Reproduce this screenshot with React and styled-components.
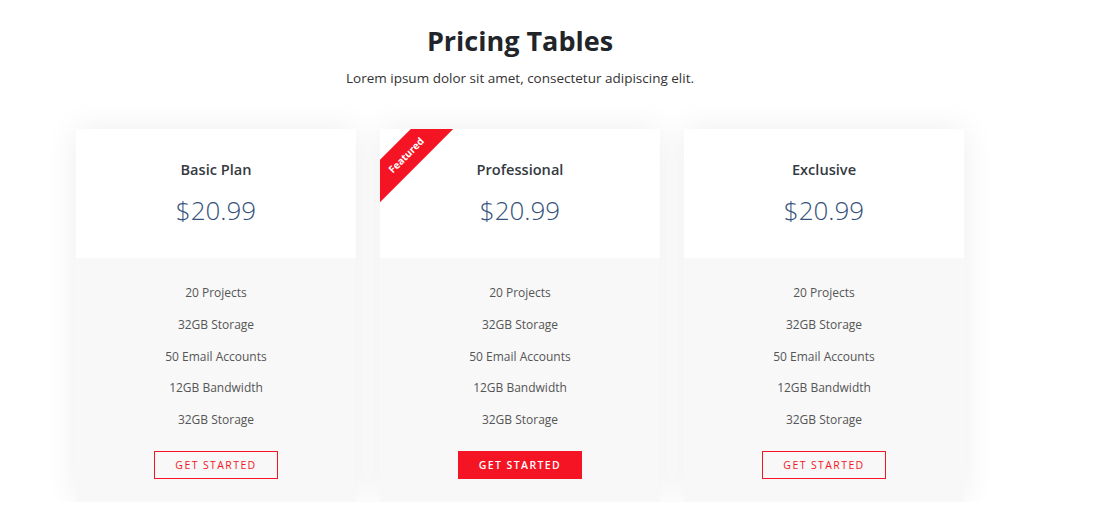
import styled, { createGlobalStyle } from "styled-components";

const GlobalStyle = createGlobalStyle`
  body {
    margin: 0;
    background: #fff;
    font-family: "Open Sans", "Noto Sans", sans-serif;
  }
`;

const Page = styled.div`
  width: 1040px;
  padding-top: 23px;
  display: flex;
  flex-direction: column;
  align-items: center;
`;

const Heading = styled.h1`
  margin: 0;
  font-size: 27px;
  line-height: 36px;
  font-weight: 700;
  color: #212529;
`;

const Lead = styled.p`
  margin: 9px 0 0;
  font-size: 13.5px;
  line-height: 20px;
  color: #333;
`;

const Row = styled.div`
  margin-top: 41px;
  display: flex;
  gap: 24px;
`;

const Card = styled.div`
  position: relative;
  width: 280px;
  background: #f8f8f8;
  box-shadow: 0 0 32px rgba(0, 0, 0, 0.07);
  overflow: hidden;
`;

const Top = styled.div`
  background: #fff;
  height: 129px;
  box-sizing: border-box;
  padding-top: 29px;
  text-align: center;
`;

const PlanName = styled.h3`
  margin: 0;
  font-size: 14.6px;
  line-height: 22px;
  font-weight: 600;
  color: #343a40;
`;

const Price = styled.div`
  margin-top: 12px;
  font-size: 26px;
  line-height: 36px;
  font-weight: 300;
  color: #34527a;
`;

const Features = styled.ul`
  list-style: none;
  margin: 0;
  padding: 19px 0 0;
  text-align: center;
`;

const Feature = styled.li`
  font-size: 12px;
  line-height: 31.8px;
  color: #555;
`;

const Footer = styled.div`
  display: flex;
  justify-content: center;
  padding: 15px 0 23px;
`;

const Button = styled.a`
  box-sizing: border-box;
  width: 124px;
  height: 28px;
  display: flex;
  align-items: center;
  justify-content: center;
  border: 1px solid #f41424;
  background: ${(p) => (p.$filled ? "#f41424" : "transparent")};
  color: ${(p) => (p.$filled ? "#fff" : "#f41424")};
  font-size: 10.5px;
  font-weight: ${(p) => (p.$filled ? 600 : 400)};
  letter-spacing: 1.4px;
  text-transform: uppercase;
  text-decoration: none;
  cursor: pointer;
`;

const Ribbon = styled.div`
  position: absolute;
  top: 0;
  left: 0;
  width: 80px;
  height: 80px;
  overflow: hidden;
`;

const RibbonBand = styled.div`
  position: absolute;
  left: -34px;
  top: 11px;
  width: 120px;
  height: 30px;
  line-height: 30px;
  transform: rotate(-45deg);
  background: #f41424;
  color: #fff;
  font-size: 10px;
  font-weight: 700;
  text-align: center;
`;

const features = [
  "20 Projects",
  "32GB Storage",
  "50 Email Accounts",
  "12GB Bandwidth",
  "32GB Storage",
];

const plans = [
  { name: "Basic Plan", price: "$20.99" },
  { name: "Professional", price: "$20.99", featured: true },
  { name: "Exclusive", price: "$20.99" },
];

const App = () => (
  <>
    <GlobalStyle />
    <Page>
      <Heading>Pricing Tables</Heading>
      <Lead>Lorem ipsum dolor sit amet, consectetur adipiscing elit.</Lead>
      <Row>
        {plans.map((plan) => (
          <Card key={plan.name}>
            {plan.featured && (
              <Ribbon>
                <RibbonBand>Featured</RibbonBand>
              </Ribbon>
            )}
            <Top>
              <PlanName>{plan.name}</PlanName>
              <Price>{plan.price}</Price>
            </Top>
            <Features>
              {features.map((f, i) => (
                <Feature key={i}>{f}</Feature>
              ))}
            </Features>
            <Footer>
              <Button $filled={plan.featured}>Get Started</Button>
            </Footer>
          </Card>
        ))}
      </Row>
    </Page>
  </>
);

export default App;
